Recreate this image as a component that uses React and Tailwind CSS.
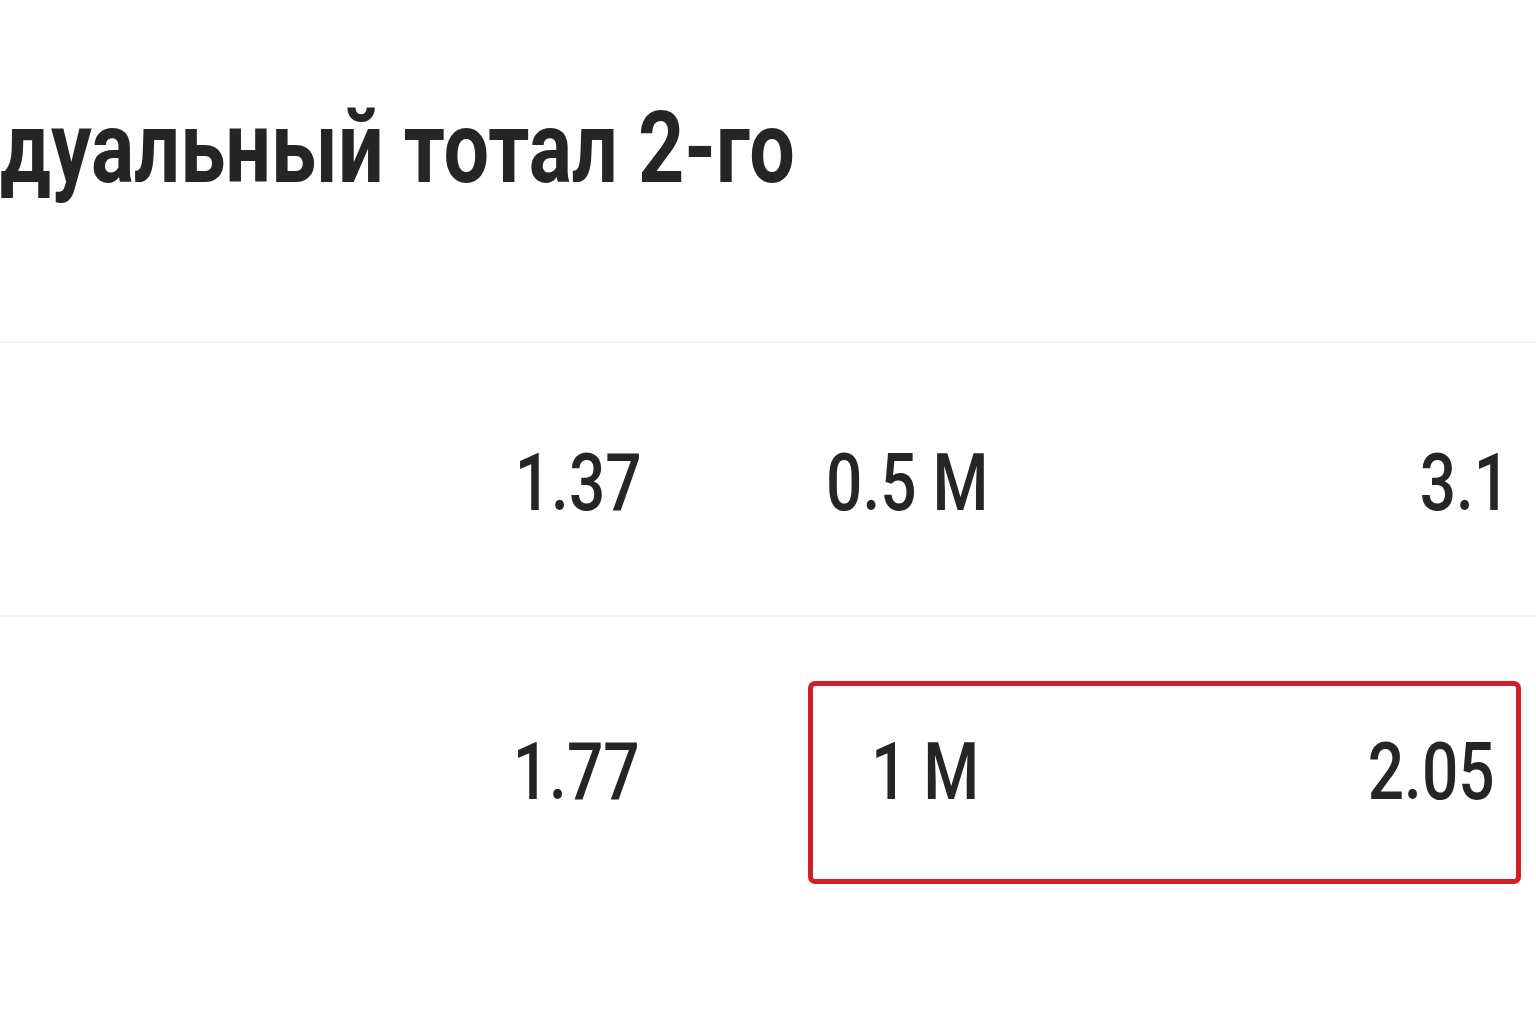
function Num({ children, side = 'left' }) {
  return (
    <span
      className={
        'inline-block scale-x-[0.8] whitespace-nowrap ' +
        (side === 'left' ? 'origin-left' : 'origin-right')
      }
    >
      {children}
    </span>
  );
}

export default function App() {
  return (
    <div
      className="w-[1536px] h-[1024px] overflow-hidden bg-white text-[#252525]"
      style={{ fontFamily: 'Roboto, "Noto Sans", sans-serif' }}
    >
      {/* Title */}
      <div className="h-[341px] pt-[88px]">
        <h1 className="text-[101px] font-bold leading-[120px] whitespace-nowrap">
          <span className="inline-block scale-x-[0.8] origin-left">дуальный тотал 2-го</span>
        </h1>
      </div>

      {/* Row 1 */}
      <div className="h-[274px] border-t-2 border-[#f3f3f3] flex items-center pt-[8px] text-[80px] font-medium leading-none">
        <div className="w-[642px] text-right">
          <Num side="right">1.37</Num>
        </div>
        <div className="ml-[166px] w-[713px] flex justify-between pl-[18px] pr-[11px]">
          <Num>0.5 M</Num>
          <Num side="right">3.1</Num>
        </div>
      </div>

      {/* Row 2 */}
      <div className="border-t-2 border-[#f3f3f3] pt-[64px] flex items-center text-[80px] font-medium leading-none">
        <div className="w-[640px] text-right -mt-[22px]">
          <Num side="right">1.77</Num>
        </div>
        <div className="ml-[168px] w-[713px] h-[203px] rounded-[7px] border-[5px] border-[#d21e26] flex justify-between items-center pl-[58px] pr-[21px] pb-[22px]">
          <Num>1 M</Num>
          <Num side="right">2.05</Num>
        </div>
      </div>
    </div>
  );
}
